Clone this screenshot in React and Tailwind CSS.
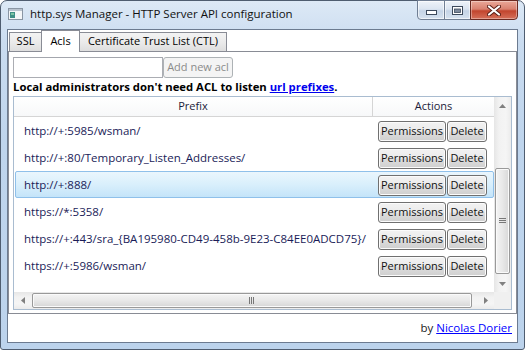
import React from 'react'

const rows = [
  'http://+:5985/wsman/',
  'http://+:80/Temporary_Listen_Addresses/',
  'http://+:888/',
  'https://*:5358/',
  'https://+:443/sra_{BA195980-CD49-458b-9E23-C84EE0ADCD75}/',
  'https://+:5986/wsman/',
]

function WinButton({ children, className = '' }) {
  return (
    <div
      className={`h-[21px] flex items-center justify-center border border-[#707070] rounded-[3px] bg-[linear-gradient(180deg,#f2f2f2_0%,#ebebeb_48%,#dddddd_52%,#cfcfcf_100%)] shadow-[inset_0_0_0_1px_#fbfbfb] text-[#111] ${className}`}
    >
      {children}
    </div>
  )
}

function Arrow({ dir }) {
  const pts = {
    up: '0,4 3.5,0 7,4',
    down: '0,0 3.5,4 7,0',
    left: '4,0 0,3.5 4,7',
    right: '0,0 4,3.5 0,7',
  }[dir]
  const vertical = dir === 'up' || dir === 'down'
  return (
    <svg width={vertical ? 7 : 4} height={vertical ? 4 : 7} viewBox={vertical ? '0 0 7 4' : '0 0 4 7'}>
      <polygon points={pts} fill="#5a5a5a" opacity="0.75" />
    </svg>
  )
}

function TitleIcon() {
  return (
    <svg width="15" height="12" viewBox="0 0 15 12">
      <rect x="0.5" y="0.5" width="14" height="11" fill="#f4f6f8" stroke="#8a96a4" />
      <rect x="1" y="1" width="13" height="2" fill="#b9c3cf" />
      <rect x="2" y="4" width="5" height="6" fill="#3f8f86" />
      <rect x="3" y="5" width="3" height="2" fill="#7cc4a4" />
    </svg>
  )
}

function CaptionButtons() {
  const glass =
    'bg-[linear-gradient(180deg,#eef3f9_0%,#dbe5f1_45%,#c5d4e6_55%,#d6e2ef_100%)] border border-[#707f94] shadow-[inset_0_0_0_1px_rgba(255,255,255,0.6)]'
  return (
    <div className="flex ml-auto -mt-[1px]">
      <div className={`w-[28px] h-[20px] rounded-bl-[4px] flex items-center justify-center ${glass}`}>
        <svg width="11" height="5" viewBox="0 0 11 5" className="mt-[5px]">
          <rect x="0.5" y="0.5" width="10" height="4" fill="#ffffff" stroke="#3d4a5c" />
        </svg>
      </div>
      <div className={`w-[27px] h-[20px] -ml-[1px] flex items-center justify-center ${glass}`}>
        <svg width="11" height="9" viewBox="0 0 11 9">
          <rect x="0.5" y="0.5" width="10" height="8" fill="#ffffff" stroke="#3d4a5c" />
          <rect x="2.5" y="3" width="6" height="3.5" fill="#7d8a9c" stroke="#3d4a5c" strokeWidth="0.8" />
        </svg>
      </div>
      <div className="w-[48px] h-[20px] -ml-[1px] rounded-br-[4px] flex items-center justify-center border border-[#6b2a22] bg-[linear-gradient(180deg,#eaa899_0%,#d98170_45%,#c2452e_55%,#d6705a_100%)] shadow-[inset_0_0_0_1px_rgba(255,255,255,0.35)]">
        <svg width="14" height="11" viewBox="0 0 14 11">
          <path d="M2 1.5 L12 9.5 M12 1.5 L2 9.5" stroke="#5a1e16" strokeWidth="4" strokeLinecap="round" />
          <path d="M2 1.5 L12 9.5 M12 1.5 L2 9.5" stroke="#ffffff" strokeWidth="2.2" strokeLinecap="round" />
        </svg>
      </div>
    </div>
  )
}

export default function App() {
  return (
    <div className="w-[525px] h-[350px] bg-white font-['Open_Sans','Noto_Sans',sans-serif] text-[11px] text-black">
      <div className="w-full h-full flex flex-col px-[6px] pb-[6px] border border-[#4f5d70] rounded-t-[7px] rounded-b-[3px] bg-[linear-gradient(180deg,#dde9f6_0%,#cadcf0_12%,#bfd5ed_40%,#bcd3ec_100%)]">
        {/* title bar */}
        <div className="h-[28px] flex items-start shrink-0">
          <div className="ml-[1px] mt-[7px]">
            <TitleIcon />
          </div>
          <div className="ml-[7px] mt-[5px] text-[11.5px] leading-[16px] text-[#111]">
            http.sys Manager - HTTP Server API configuration
          </div>
          <CaptionButtons />
        </div>

        {/* client */}
        <div className="flex-1 flex flex-col bg-white border border-[#6c7b90]">
          {/* tabs */}
          <div className="h-[22px] flex items-end pl-[1px] shrink-0">
            <div className="w-[33px] h-[20px] border border-[#898c95] bg-[linear-gradient(180deg,#f3f3f3_0%,#ebebeb_50%,#dedede_100%)] flex items-center justify-center pb-[1px]">
              SSL
            </div>
            <div className="relative z-10 -ml-[1px] w-[39px] h-[22px] border-x border-t border-[#898c95] bg-white flex items-center justify-center pb-[1px]">
              Acls
            </div>
            <div className="-ml-[1px] w-[148px] h-[20px] border border-[#898c95] bg-[linear-gradient(180deg,#f3f3f3_0%,#ebebeb_50%,#dedede_100%)] flex items-center justify-center pb-[1px]">
              Certificate Trust List (CTL)
            </div>
          </div>

          {/* tab panel */}
          <div className="-mt-[1px] h-[263px] shrink-0 border border-[#898c95] bg-white px-[4px] pt-[5px] flex flex-col">
            <div className="flex h-[21px]">
              <div className="w-[150px] h-[21px] border border-[#abadb3] border-t-[#a3a6ad] bg-white" />
              <div className="w-[70px] h-[21px] border border-[#adb2b5] rounded-[3px] bg-[#f4f4f4] text-[#8b8b8b] flex items-center justify-center">
                Add new acl
              </div>
            </div>
            <div className="h-[18px] flex items-center font-bold text-[11.3px] text-black whitespace-nowrap">
              Local administrators don't need ACL to listen&nbsp;
              <span className="text-[#0000ee] underline">url prefixes</span>.
            </div>

            {/* grid */}
            <div className="h-[214px] border border-[#a9bcd0] flex flex-col">
              <div className="flex h-[195px]">
                <div className="w-[480px] flex flex-col">
                  <div className="h-[20px] flex border-b border-[#d5d5d5] bg-[linear-gradient(180deg,#ffffff_0%,#f7f8f9_100%)] text-[#1b1b3a]">
                    <div className="w-[359px] border-r border-[#d5d5d5] flex items-center justify-center">Prefix</div>
                    <div className="flex-1 flex items-center justify-center">Actions</div>
                  </div>
                  {rows.map((r, i) => (
                    <div
                      key={r}
                      className={`h-[27px] flex items-center ml-[1px] ${
                        i === 2
                          ? 'border border-[#8fc0ea] rounded-[2px] bg-[linear-gradient(180deg,#eaf6fd_0%,#d9effc_50%,#c4e4f9_100%)]'
                          : 'border border-transparent'
                      }`}
                    >
                      <div className="w-[357px] pl-[8px] text-[11.5px] text-[#1a1c58] whitespace-nowrap overflow-hidden">{r}</div>
                      <div className="flex pl-[5px] pt-[1px]">
                        <WinButton className="w-[68px]">Permissions</WinButton>
                        <WinButton className="w-[40px] ml-[1px]">Delete</WinButton>
                      </div>
                    </div>
                  ))}
                </div>
                {/* vertical scrollbar */}
                <div className="w-[17px] flex flex-col bg-[linear-gradient(90deg,#e6e6e6_0%,#f2f2f2_30%,#f5f5f5_70%,#ebebeb_100%)]">
                  <div className="h-[17px] flex items-center justify-center">
                    <Arrow dir="up" />
                  </div>
                  <div className="flex-1 flex flex-col">
                    <div className="mt-[54px] mx-[1px] h-[106px] rounded-[2px] border border-[#999] bg-[linear-gradient(90deg,#f4f4f4_0%,#e8e8e8_50%,#d8d8d8_100%)] shadow-[inset_0_0_0_1px_#fafafa] flex items-center justify-center">
                      <svg width="7" height="6" viewBox="0 0 7 6">
                        <path d="M0 0.5 H7 M0 2.5 H7 M0 4.5 H7" stroke="#777" strokeWidth="1" />
                      </svg>
                    </div>
                  </div>
                  <div className="h-[17px] flex items-center justify-center">
                    <Arrow dir="down" />
                  </div>
                </div>
              </div>
              {/* horizontal scrollbar */}
              <div className="h-[17px] flex">
                <div className="w-[480px] flex items-center bg-[linear-gradient(180deg,#e6e6e6_0%,#f2f2f2_30%,#f5f5f5_70%,#ebebeb_100%)]">
                  <div className="w-[17px] h-[17px] flex items-center justify-center">
                    <Arrow dir="left" />
                  </div>
                  <div className="ml-[1px] w-[440px] h-[15px] rounded-[2px] border border-[#999] bg-[linear-gradient(180deg,#f4f4f4_0%,#e8e8e8_50%,#d6d6d6_100%)] shadow-[inset_0_0_0_1px_#fafafa] flex items-center justify-center">
                    <svg width="6" height="7" viewBox="0 0 6 7">
                      <path d="M0.5 0 V7 M2.5 0 V7 M4.5 0 V7" stroke="#777" strokeWidth="1" />
                    </svg>
                  </div>
                  <div className="ml-auto w-[17px] h-[17px] flex items-center justify-center">
                    <Arrow dir="right" />
                  </div>
                </div>
                <div className="w-[17px] bg-[#f0f0f0]" />
              </div>
            </div>
          </div>

          {/* footer */}
          <div className="flex-1 flex items-center justify-end pr-[5px] text-[11.5px]">
            <span className="text-[#222]">by&nbsp;</span>
            <span className="text-[#0000ff] underline">Nicolas Dorier</span>
          </div>
        </div>
      </div>
    </div>
  )
}
